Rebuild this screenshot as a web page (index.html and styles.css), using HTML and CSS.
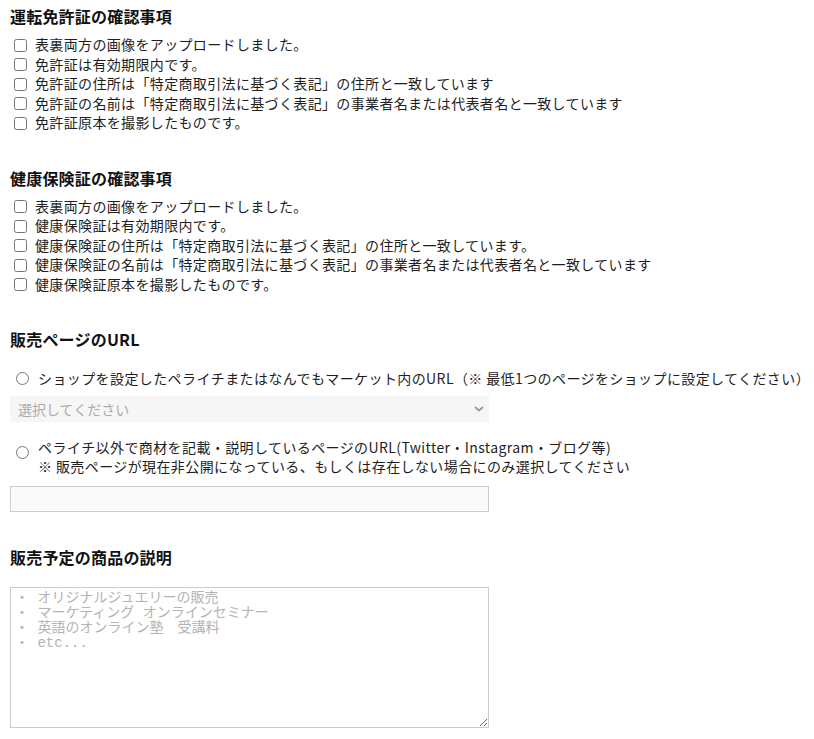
FILE: index.html
```html
<!DOCTYPE html>
<html lang="ja">
  <head>
    <meta charset="UTF-8" />
    <meta name="viewport" content="width=device-width, initial-scale=1.0" />
    <title>ショップ審査</title>
    <link rel="stylesheet" href="styles.css">
  </head>

  <body>
    <div class="page">
      <!-- 運転免許証 -->
      <section class="section">
        <h2 class="section-title">運転免許証の確認事項</h2>
        <ul class="check-list">
          <li><label><input type="checkbox" />表裏両方の画像をアップロードしました。</label></li>
          <li><label><input type="checkbox" />免許証は有効期限内です。</label></li>
          <li><label><input type="checkbox" />免許証の住所は「特定商取引法に基づく表記」の住所と一致しています</label></li>
          <li><label><input type="checkbox" />免許証の名前は「特定商取引法に基づく表記」の事業者名または代表者名と一致しています</label></li>
          <li><label><input type="checkbox" />免許証原本を撮影したものです。</label></li>
        </ul>
      </section>

      <!-- 健康保険証 -->
      <section class="section">
        <h2 class="section-title">健康保険証の確認事項</h2>
        <ul class="check-list">
          <li><label><input type="checkbox" />表裏両方の画像をアップロードしました。</label></li>
          <li><label><input type="checkbox" />健康保険証は有効期限内です。</label></li>
          <li><label><input type="checkbox" />健康保険証の住所は「特定商取引法に基づく表記」の住所と一致しています。</label></li>
          <li><label><input type="checkbox" />健康保険証の名前は「特定商取引法に基づく表記」の事業者名または代表者名と一致しています</label></li>
          <li><label><input type="checkbox" />健康保険証原本を撮影したものです。</label></li>
        </ul>
      </section>

      <!-- 販売ページのURL -->
      <section class="section">
        <h2 class="section-title">販売ページのURL</h2>
        <label class="radio-row radio-first">
          <input type="radio" name="url_type" value="shop" />
          <span>ショップを設定したペライチまたはなんでもマーケット内のURL（※ 最低1つのページをショップに設定してください）</span>
        </label>
        <div class="select-wrap">
          <select class="page-select">
            <option>選択してください</option>
          </select>
          <svg class="select-arrow" width="10" height="6" viewBox="0 0 10 6">
            <path d="M1 1 L5 4.5 L9 1" fill="none" stroke="#9a9a9a" stroke-width="1.8" />
          </svg>
        </div>
        <label class="radio-row radio-second">
          <input type="radio" name="url_type" value="other" />
          <span>
            ペライチ以外で商材を記載・説明しているページのURL(Twitter・Instagram・ブログ等)<br />
            ※ 販売ページが現在非公開になっている、もしくは存在しない場合にのみ選択してください
          </span>
        </label>
        <input type="text" class="url-input" name="other_url" />
      </section>

      <!-- 商品の説明 -->
      <section class="section">
        <h2 class="section-title title-spaced">販売予定の商品の説明</h2>
        <textarea
          class="description"
          name="description"
          placeholder="・ オリジナルジュエリーの販売&#10;・ マーケティング オンラインセミナー&#10;・ 英語のオンライン塾　受講料&#10;・ etc..."
        ></textarea>
      </section>
    </div>
  </body>
</html>
```

FILE: styles.css
```css
* {
  box-sizing: border-box;
}

body {
  margin: 0;
  background-color: #fff;
  color: #1e1e1e;
  font-family: "Noto Sans CJK JP", "Noto Sans", sans-serif;
  font-size: 14px;
}

.page {
  padding: 4px 10px 0;
}

.section {
  margin-bottom: 33px;
}

.section-title {
  margin: 0 0 7px;
  font-size: 16px;
  font-weight: 700;
  line-height: 24px;
  color: #111;
  letter-spacing: 0.2px;
}

.title-spaced {
  margin-bottom: 18px;
}

.check-list {
  list-style: none;
  margin: 0;
  padding: 0;
}

.check-list li {
  height: 19.5px;
  line-height: 19.5px;
}

.check-list label {
  display: flex;
  align-items: center;
  white-space: nowrap;
  letter-spacing: 0.35px;
}

.check-list input {
  width: 13px;
  height: 13px;
  margin: 1px 8px 0 4px;
}

.radio-row {
  display: flex;
  align-items: flex-start;
  white-space: nowrap;
  letter-spacing: 0.4px;
}

.radio-row input {
  width: 13px;
  height: 13px;
  flex-shrink: 0;
  margin: 0 9px 0 6px;
}

.radio-first {
  margin-top: 17px;
  line-height: 20px;
}

.radio-first input {
  margin-top: 4px;
}

.radio-second {
  margin-top: 16px;
  line-height: 19px;
}

.radio-second input {
  margin-top: 8px;
}

.select-wrap {
  position: relative;
  width: 479px;
  margin-top: 8px;
}

.page-select {
  display: block;
  width: 100%;
  height: 26px;
  padding: 0 8px;
  border: none;
  background-color: #f6f6f6;
  color: #aaa;
  font-family: inherit;
  font-size: 14px;
  appearance: none;
  -webkit-appearance: none;
  outline: none;
}

.select-arrow {
  position: absolute;
  right: 5px;
  top: 10px;
  pointer-events: none;
}

.url-input {
  display: block;
  width: 479px;
  height: 26px;
  margin-top: 10px;
  border: 1px solid #ccc;
  background-color: #fafafa;
  font-family: inherit;
  font-size: 14px;
  outline: none;
}

.description {
  display: block;
  width: 479px;
  height: 141px;
  padding: 3px 4px;
  border: 1px solid #ccc;
  background-color: #fff;
  font-family: "Liberation Mono", "Noto Sans CJK JP", monospace;
  font-size: 14px;
  line-height: 15px;
  outline: none;
}

.description::placeholder {
  color: #b4b4b4;
}
```
